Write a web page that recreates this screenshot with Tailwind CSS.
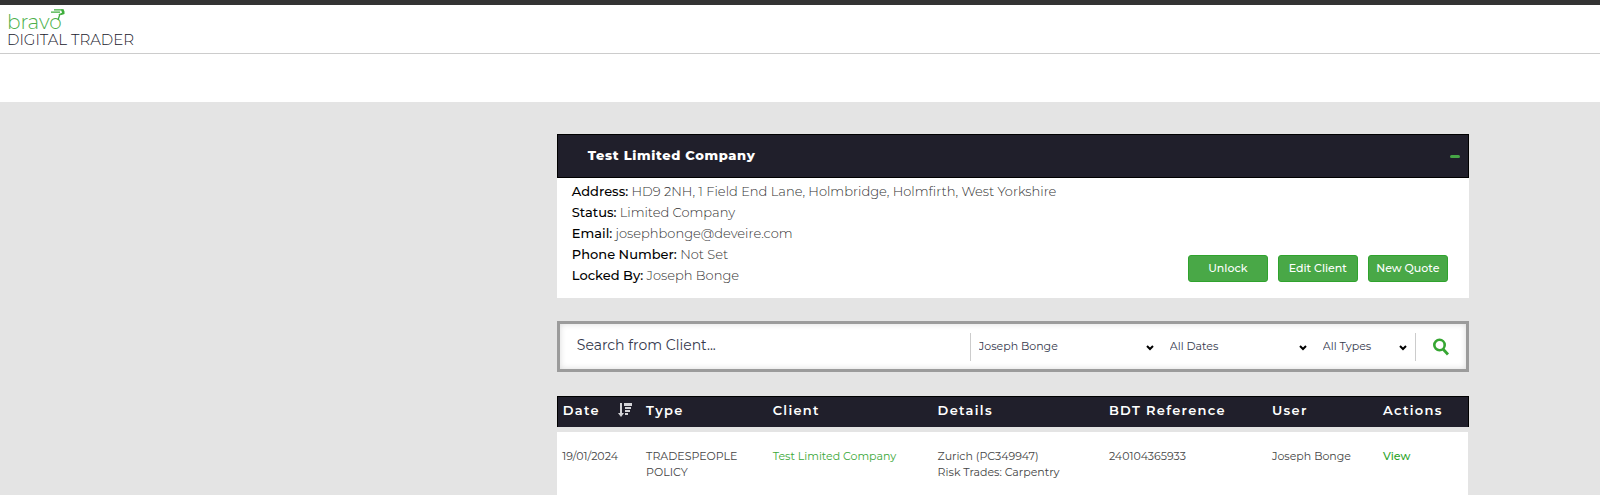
<!DOCTYPE html>
<html lang="en">
<head>
  <meta charset="UTF-8">
  <meta name="viewport" content="width=device-width, initial-scale=1.0">
  <title>Bravo Digital Trader</title>
  <script src="https://cdn.jsdelivr.net/npm/@tailwindcss/browser@4"></script>
</head>
<body class="bg-[#e4e4e4] min-h-screen overflow-x-hidden font-['Montserrat','Inter',sans-serif] text-[#333]">

  <header class="bg-white border-t-5 border-t-[#333]">
    <div class="h-[49px] border-b border-[#ccc] px-[7px] pt-1">
      <a href="#" class="inline-flex flex-col">
        <span class="flex items-start text-[#4cb04a]">
          <span class="pt-[3px] text-[20px] leading-5 font-light">bravo</span>
          <svg class="w-[14px] h-[14px] -ml-[11px]" viewBox="0 0 14 14" fill="none" stroke="#3fae3c" aria-hidden="true">
            <path d="M3 0.800h9.500M0 3.200h9" stroke-width="1.300"/>
            <path d="M10 0.500h2.500l1 2v2.500l-3 1-3.500-.5 4-1.800z" fill="#3fae3c" stroke="none"/>
            <path d="M9 5L7 11" stroke-width="1.300"/>
          </svg>
        </span>
        <span class="text-[15px] leading-4 font-light text-[#20202c]">DIGITAL TRADER</span>
      </a>
    </div>
    <div class="h-12"></div>
  </header>

  <main class="w-[57%] ml-[34.8%] pt-8">

    <section class="bg-white">
      <div class="h-11 bg-[#201f2b] border border-black flex items-center justify-between pl-[30px] pr-2">
        <h1 class="text-[13px] font-extrabold tracking-wider text-white">Test Limited Company</h1>
        <button type="button" aria-label="Collapse" class="w-[10px] h-5 flex items-center">
          <span class="block w-full h-[3px] rounded-full bg-[#46a546]"></span>
        </button>
      </div>
      <div class="h-[120px] flex justify-between pl-[15px] pr-[21px] pt-[3px] pb-4">
        <div class="text-[13px] leading-[21px] font-light">
          <p><span class="font-medium text-black">Address:</span> HD9 2NH, 1 Field End Lane, Holmbridge, Holmfirth, West Yorkshire</p>
          <p><span class="font-medium text-black">Status:</span> Limited Company</p>
          <p><span class="font-medium text-black">Email:</span> josephbonge@deveire.com</p>
          <p><span class="font-medium text-black">Phone Number:</span> Not Set</p>
          <p><span class="font-medium text-black">Locked By:</span> Joseph Bonge</p>
        </div>
        <div class="flex items-end gap-[10px] text-[11px] font-medium text-white">
          <button type="button" class="w-20 h-[27px] rounded-[3px] bg-[#49a847] border border-[#2fa32d]">Unlock</button>
          <button type="button" class="w-20 h-[27px] rounded-[3px] bg-[#49a847] border border-[#2fa32d]">Edit Client</button>
          <button type="button" class="w-20 h-[27px] rounded-[3px] bg-[#49a847] border border-[#2fa32d] whitespace-nowrap">New Quote</button>
        </div>
      </div>
    </section>

    <form class="mt-[23px] h-[51px] bg-white border-3 border-[#9b9b9b] shadow-[inset_0_0_6px_rgba(0,0,0,0.15)] flex items-center text-[11px] text-[#35394d]">
      <input type="text" aria-label="Search" placeholder="Search from Client..." class="flex-1 min-w-0 h-7 pl-[17px] pb-[3px] text-[14px] placeholder:text-[#35394d] focus:outline-none">
      <div class="relative w-[192px] border-l border-[#ccc]">
        <select aria-label="User" class="block w-full h-7 pl-2 appearance-none focus:outline-none">
          <option>Joseph Bonge</option>
        </select>
        <svg class="absolute right-2 top-3 w-2 h-[6px] pointer-events-none" viewBox="0 0 8 6" fill="none" stroke="#000" stroke-width="2"><path d="M1 1l3 3 3-3"/></svg>
      </div>
      <div class="relative w-[153px]">
        <select aria-label="Dates" class="block w-full h-7 pl-2 appearance-none focus:outline-none">
          <option>All Dates</option>
        </select>
        <svg class="absolute right-2 top-3 w-2 h-[6px] pointer-events-none" viewBox="0 0 8 6" fill="none" stroke="#000" stroke-width="2"><path d="M1 1l3 3 3-3"/></svg>
      </div>
      <div class="relative w-[101px] border-r border-[#ccc]">
        <select aria-label="Types" class="block w-full h-7 pl-2 appearance-none focus:outline-none">
          <option>All Types</option>
        </select>
        <svg class="absolute right-2 top-3 w-2 h-[6px] pointer-events-none" viewBox="0 0 8 6" fill="none" stroke="#000" stroke-width="2"><path d="M1 1l3 3 3-3"/></svg>
      </div>
      <button type="submit" aria-label="Search" class="w-[50px] h-7 flex items-center justify-center">
        <svg class="w-4 h-[18px]" viewBox="0 0 16 18" fill="none" stroke="#36a632"><circle cx="6.500" cy="7" r="5.200" stroke-width="2.600"/><path d="M10 11l5 5.500" stroke-width="2.800"/></svg>
      </button>
    </form>

    <table class="mt-6 w-full table-fixed text-left">
      <colgroup>
        <col class="w-[9.2%]">
        <col class="w-[13.9%]">
        <col class="w-[18.1%]">
        <col class="w-[18.8%]">
        <col class="w-[17.9%]">
        <col class="w-[12.2%]">
        <col class="w-[9.9%]">
      </colgroup>
      <thead class="bg-[#201f2b] text-[13px] leading-4 text-white tracking-widest border border-black">
        <tr class="h-[33px]">
          <th class="px-[5px] pb-1 font-semibold">
            <span class="flex items-center justify-between pr-1">Date
              <svg class="w-[14px] h-[14px]" viewBox="0 0 14 14" fill="#d4d4d8" aria-hidden="true"><path d="M2 0h2v10h2l-3 4-3-4h2zM6 0h8v3H6zM7 4h6v2H7zM7 7h5v2H7zM7 10h3v2H7z"/></svg>
            </span>
          </th>
          <th class="px-[5px] pb-1 font-semibold">Type</th>
          <th class="px-[5px] pb-1 font-semibold">Client</th>
          <th class="px-[5px] pb-1 font-semibold">Details</th>
          <th class="px-[5px] pb-1 font-semibold">BDT Reference</th>
          <th class="px-[5px] pb-1 font-semibold">User</th>
          <th class="px-[5px] pb-1 font-semibold">Actions</th>
        </tr>
      </thead>
      <tbody class="bg-white border-t-5 border-[#e4e4e4] text-[11px] leading-4 text-[#444] align-top">
        <tr class="h-20">
          <td class="px-[5px] pt-4">19/01/2024</td>
          <td class="px-[5px] pt-4">TRADESPEOPLE POLICY</td>
          <td class="px-[5px] pt-4"><a href="#" class="text-[#3ba838]">Test Limited Company</a></td>
          <td class="px-[5px] pt-4">Zurich (PC349947)<br>Risk Trades: Carpentry</td>
          <td class="px-[5px] pt-4">240104365933</td>
          <td class="px-[5px] pt-4">Joseph Bonge</td>
          <td class="px-[5px] pt-4"><a href="#" class="text-[#2ba428] font-medium">View</a></td>
        </tr>
      </tbody>
    </table>

  </main>

</body>
</html>
